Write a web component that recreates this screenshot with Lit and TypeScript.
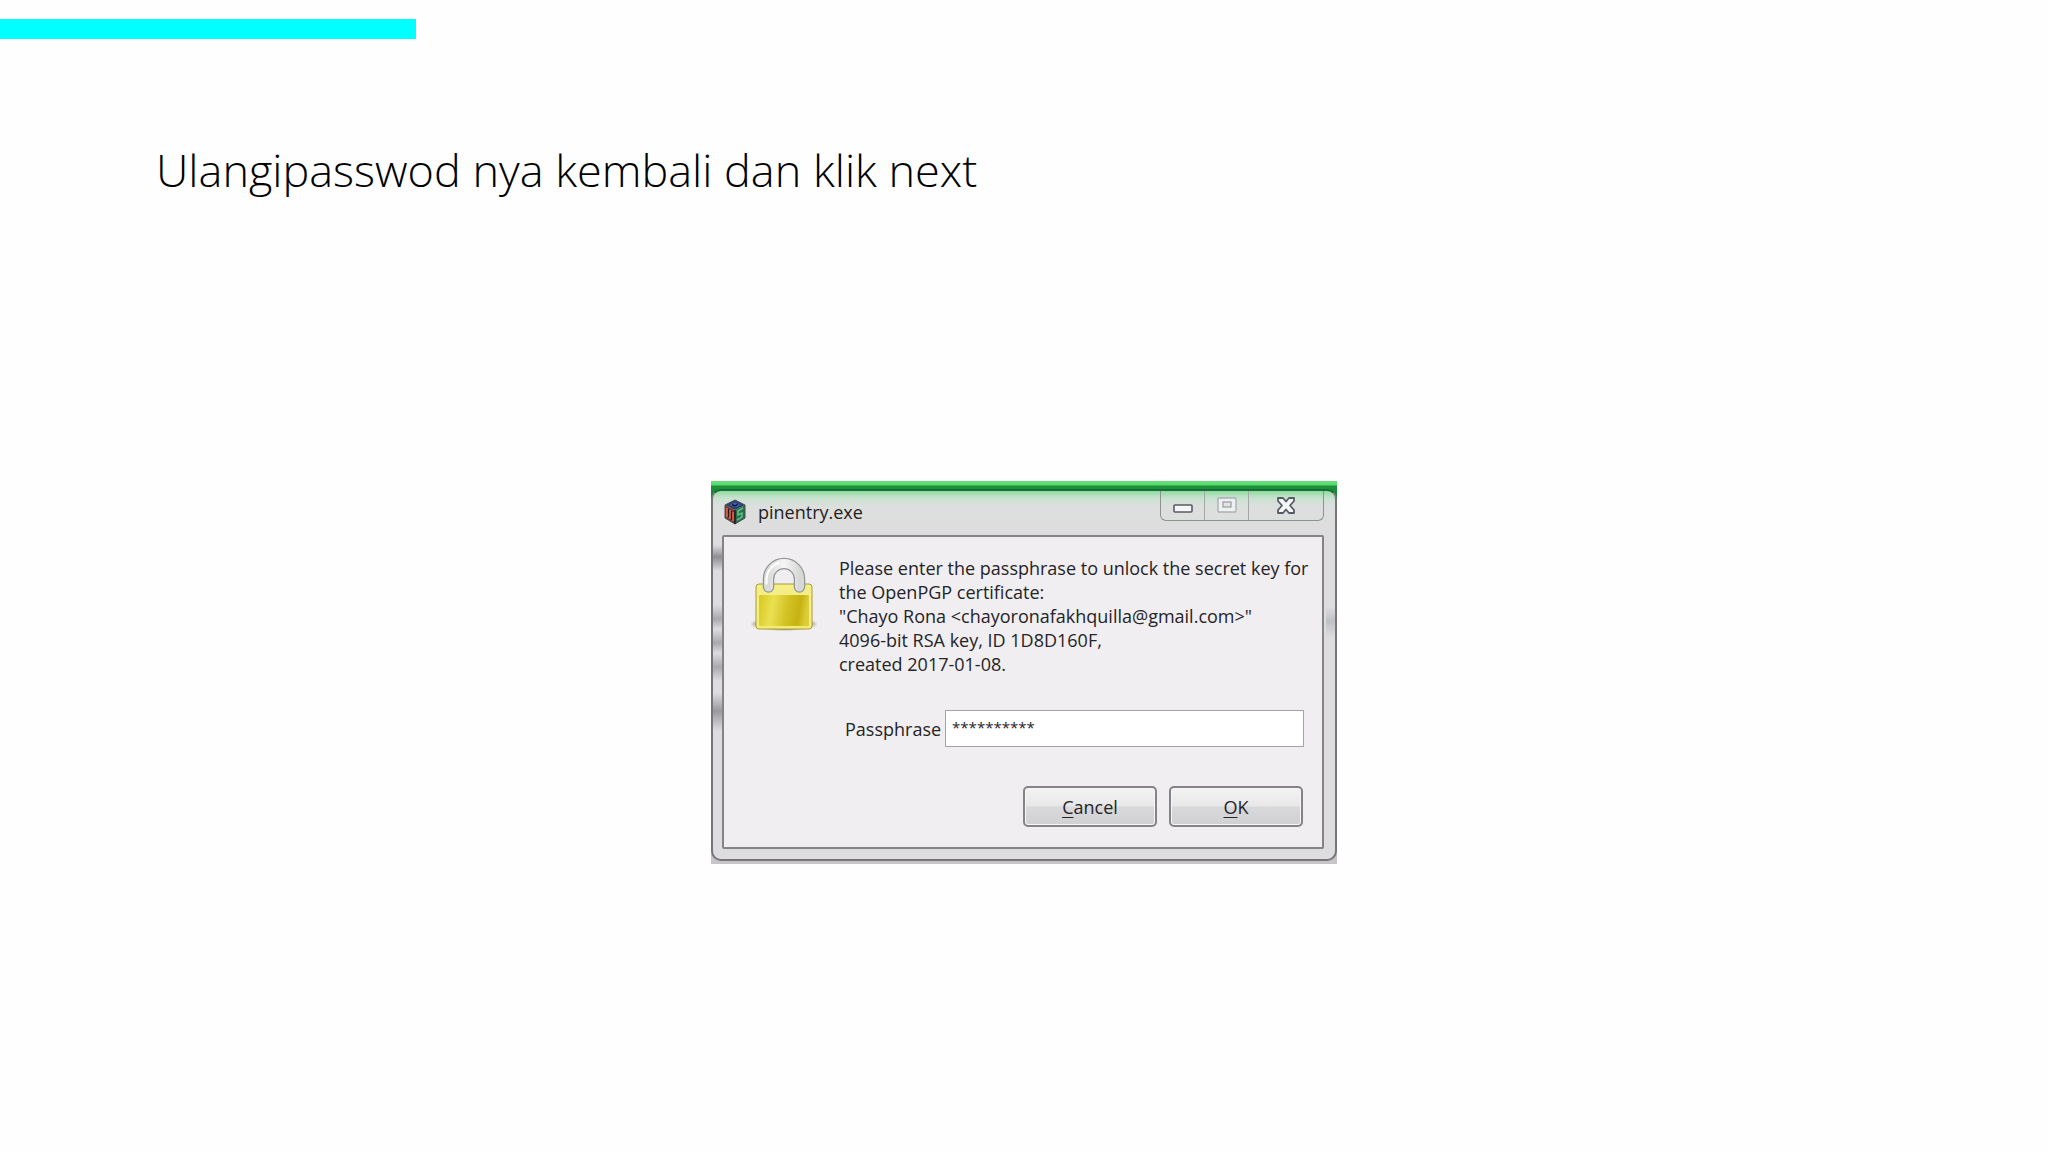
import { LitElement, html, css, svg } from "lit";
import { customElement, state } from "lit/decorators.js";

const logo = svg`
  <svg class="logo" viewBox="0 0 22 26" aria-hidden="true">
    <path d="M11 1 21 6 11 11 1 6Z" fill="#2b3f6b"/>
    <path d="M1 6 11 11V25L1 19Z" fill="#7b3a30"/>
    <path d="M21 6 11 11V25L21 19Z" fill="#2f6b48"/>
    <path d="M5 6 11 3.500 17 6 11 8.500Z" fill="#3f64b4"/>
    <path d="M8 5.500 11 7 14 5" fill="none" stroke="#141b33" stroke-width="1.500"/>
    <path d="M3 9v9M6 11v9M9 13v9" fill="none" stroke="#e2714f" stroke-width="1.500"/>
    <path d="M4.500 10v8M7.500 12v9" fill="none" stroke="#2b1715" stroke-width="1.200"/>
    <path d="M19 9 14 12v4l4-2v4l-5 3" fill="none" stroke="#52c483" stroke-width="1.600"/>
    <path d="M11 1 21 6V19L11 25 1 19V6Z" fill="none" stroke="#4a4a55" stroke-width="1"/>
    <path d="M11 11V25" stroke="#17171d" stroke-width="1.400"/>
  </svg>`;

const padlock = svg`
  <svg class="padlock" viewBox="0 -1 66 76" role="img" aria-label="Locked">
    <defs>
      <linearGradient id="body" x1="0" x2="1" y1="0" y2="0.100">
        <stop offset="0" stop-color="#d8c81f"/>
        <stop offset="0.300" stop-color="#ebe052"/>
        <stop offset="0.600" stop-color="#d3c224"/>
        <stop offset="0.850" stop-color="#c6b312"/>
        <stop offset="1" stop-color="#dccd38"/>
      </linearGradient>
      <linearGradient id="steel" x1="0" x2="1">
        <stop offset="0" stop-color="#d8dad8"/>
        <stop offset="0.500" stop-color="#f6f6f6"/>
        <stop offset="1" stop-color="#d6d8d6"/>
      </linearGradient>
      <radialGradient id="shade">
        <stop offset="0.600" stop-color="#5d5628" stop-opacity="0.900"/>
        <stop offset="1" stop-color="#5d5628" stop-opacity="0"/>
      </radialGradient>
    </defs>
    <ellipse cx="33" cy="67" rx="34" ry="7" fill="url(#shade)"/>
    <rect x="5" y="27" width="56" height="45" rx="3" fill="#f5ee86" stroke="#a89b35"/>
    <rect x="8" y="38" width="50" height="31" rx="1" fill="url(#body)"/>
    <path d="M7 70H59" stroke="#f3ea70" stroke-width="2"/>
    <path d="M17.500 30V22a15.500 15.500 0 0 1 31 0V30" fill="none" stroke="#939695" stroke-width="11.500" stroke-linecap="round"/>
    <path d="M17.500 30V22a15.500 15.500 0 0 1 31 0V30" fill="none" stroke="url(#steel)" stroke-width="9" stroke-linecap="round"/>
    <path d="M15.500 27V22a17.500 17.500 0 0 1 12-16" fill="none" stroke="#fff" stroke-width="2" stroke-linecap="round"/>
  </svg>`;

@customElement("app-root")
export class AppRoot extends LitElement {
  @state() private passphrase = "**********";

  static styles = css`
    :host {
      display: block;
      min-height: 100vh;
      box-sizing: border-box;
      padding-top: 19px;
      background: #fefefe;
      color: #000;
      font-family: "Open Sans", "Noto Sans", sans-serif;
    }
    .accent {
      width: 20.3%;
      height: 20px;
      background: #00ffff;
    }
    .heading {
      margin: 0;
      padding: 101px 156px 0;
      font-size: 45px;
      line-height: 60px;
      font-weight: 340;
    }
    .stage {
      display: flex;
      justify-content: center;
      padding-top: 281px;
    }
    .backdrop {
      width: 626px;
      box-sizing: border-box;
      padding: 8px 0 3px;
      background: linear-gradient(#68e07c 0, #58d670 4px, #1c9238 5px, #128030 20px, #c6c4c6 21px);
    }
    .window {
      box-sizing: border-box;
      padding: 0 11px 10px 9px;
      border: 2px solid #77757a;
      border-top-color: #1c6a38;
      border-radius: 10px;
      background:
        linear-gradient(transparent 54px, #8f8f92 66px, transparent 80px, transparent 114px, #aaaaad 128px, transparent 138px, #aaaaad 152px, transparent 162px, #aaaaad 176px, transparent 190px, transparent 202px, #9a9a9d 220px, transparent 240px) left / 9px 100% no-repeat,
        linear-gradient(transparent 116px, #bfc1c5 130px, transparent 146px) right / 9px 100% no-repeat,
        linear-gradient(#8edba0 0, #c9e2cf 7px, #dddfde 16px, #dddcde 44px);
    }
    .titlebar {
      display: flex;
      align-items: flex-start;
      height: 44px;
    }
    .logo {
      width: 22px;
      height: 26px;
      margin: 8px 12px 0 2px;
    }
    .title {
      flex: 1;
      margin: 0;
      padding-top: 9px;
      font-size: 18px;
      line-height: 24px;
      font-weight: 400;
      color: #222;
    }
    .controls {
      display: flex;
      height: 29px;
      border: 1px solid #8b938f;
      border-top: 0;
      border-radius: 0 0 6px 6px;
    }
    .control {
      display: grid;
      place-items: center;
      width: 44px;
      padding: 0;
      border: 0;
      border-right: 1px solid #a3aaa6;
      background: none;
    }
    .control:last-child {
      width: 74px;
      border-right: 0;
    }
    .glyph {
      width: 22px;
      height: 20px;
    }
    .client {
      display: grid;
      grid-template-columns: 66px minmax(0, 1fr);
      column-gap: 22px;
      padding: 19px 18px 20px 27px;
      border: 2px solid #858387;
      border-radius: 2px;
      background: #f0eef1;
      color: #252427;
      font-size: 18px;
      line-height: 24px;
    }
    .padlock {
      width: 66px;
      height: 76px;
    }
    .message {
      margin: 0;
      white-space: nowrap;
    }
    .field {
      display: flex;
      align-items: center;
      gap: 4px;
      padding: 34px 0 39px 6px;
    }
    .entry {
      flex: 1;
      min-width: 0;
      height: 37px;
      box-sizing: border-box;
      padding: 0 6px 4px;
      border: 1px solid #a5a3a7;
      background: #fff;
      color: #252427;
      font: 15px/24px "Open Sans", sans-serif;
      outline: 0;
    }
    .actions {
      display: flex;
      justify-content: flex-end;
      gap: 12px;
      padding-right: 1px;
    }
    .action {
      width: 134px;
      height: 41px;
      padding: 0;
      border: 2px solid #858387;
      border-radius: 5px;
      background: linear-gradient(#f4f3f4 0, #e9e8e9 48%, #d9d8da 52%, #d0cfd1 100%);
      box-shadow: inset 0 0 0 1px #f7f6f7;
      color: #252427;
      font: 18px/24px "Open Sans", sans-serif;
    }
    .key {
      text-decoration: underline;
      text-underline-offset: 3px;
    }
  `;

  private onInput(e: Event) {
    this.passphrase = (e.target as HTMLInputElement).value;
  }

  render() {
    return html`
      <div class="accent"></div>
      <h1 class="heading">Ulangipasswod nya kembali dan klik next</h1>
      <main class="stage">
        <div class="backdrop">
          <section class="window" role="dialog" aria-labelledby="title">
            <header class="titlebar">
              ${logo}
              <h2 class="title" id="title">pinentry.exe</h2>
              <div class="controls">
                <button class="control" aria-label="Minimize">
                  <svg class="glyph" viewBox="0 0 22 20"><rect x="2" y="9" width="18" height="7" rx="1" fill="#f5f6f7" stroke="#555c66" stroke-width="1.600"/></svg>
                </button>
                <button class="control" aria-label="Maximize" disabled>
                  <svg class="glyph" viewBox="0 0 22 20"><rect x="2" y="2" width="18" height="14" rx="1" fill="#eff0f1" stroke="#abb0b3" stroke-width="1.400"/><rect x="7" y="6" width="8" height="5" fill="#e2e4e5" stroke="#a2a7ab" stroke-width="1.400"/></svg>
                </button>
                <button class="control" aria-label="Close">
                  <svg class="glyph" viewBox="0 0 22 20"><path d="M3 2H8L11 5.500 14 2H19V5L15 9.500 19 14V17H14L11 13.500 8 17H3V14L7 9.500 3 5Z" fill="#f5f6f7" stroke="#555c66" stroke-width="1.800" stroke-linejoin="round"/></svg>
                </button>
              </div>
            </header>
            <form class="client" @submit=${(e: Event) => e.preventDefault()}>
              ${padlock}
              <div>
                <p class="message">
                  Please enter the passphrase to unlock the secret key for<br />
                  the OpenPGP certificate:<br />
                  "Chayo Rona &lt;chayoronafakhquilla@gmail.com&gt;"<br />
                  4096-bit RSA key, ID 1D8D160F,<br />
                  created 2017-01-08.
                </p>
                <div class="field">
                  <label for="passphrase">Passphrase</label>
                  <input class="entry" id="passphrase" type="text" autocomplete="off" .value=${this.passphrase} @input=${this.onInput} />
                </div>
                <div class="actions">
                  <button class="action" type="button"><span class="key">C</span>ancel</button>
                  <button class="action" type="submit"><span class="key">O</span>K</button>
                </div>
              </div>
            </form>
          </section>
        </div>
      </main>
    `;
  }
}
